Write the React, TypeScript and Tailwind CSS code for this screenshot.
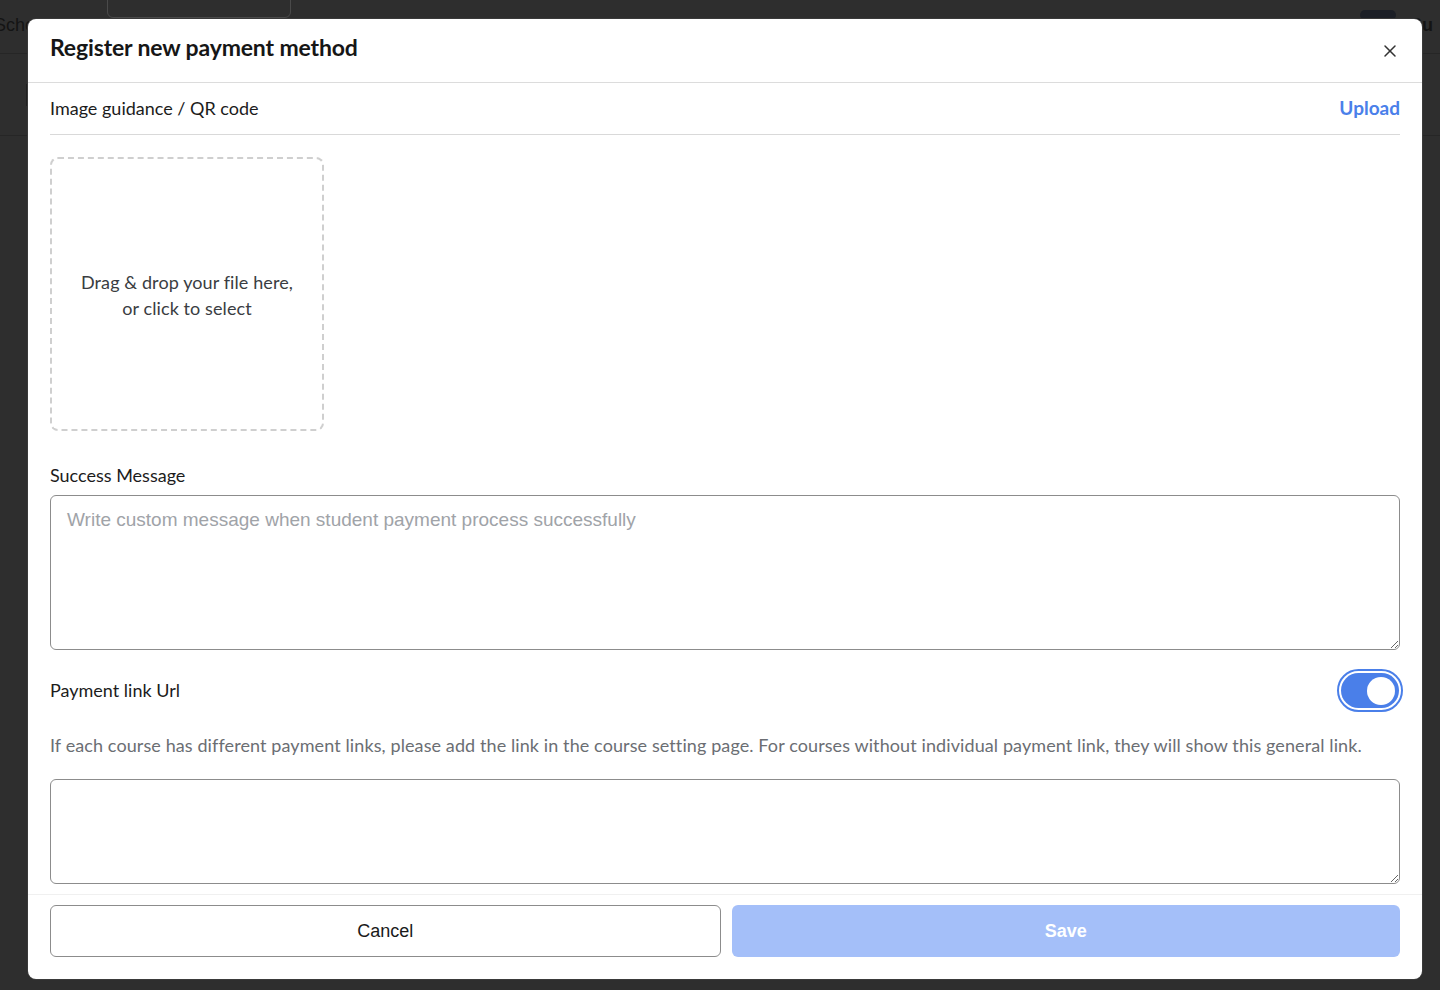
import { X } from "lucide-react";

const lato = "font-['Lato','Noto_Sans',sans-serif]";
const arial = "font-['Liberation_Sans','Arial',sans-serif]";

function Backdrop() {
  // the page behind the dialog, dimmed
  return (
    <div className="h-full w-full bg-[#2e2e2e]">
      <div className="flex items-start h-[54px] border-b border-[#262626]">
        <span className={`${arial} text-[18px] text-[#141414] mt-[12px] -ml-[6px] w-[113px]`}>Schedule</span>
        <div className="w-[184px] h-[20px] -mt-[2px] rounded-b-md border border-[#4a4a4a]" />
        <div className="flex-1" />
        <div className="w-[36px] h-[10px] mt-[10px] rounded-md bg-[#1c1f26]" />
        <span className={`${arial} text-[18px] font-bold text-[#141414] mt-[12px] ml-[14px] w-[30px] overflow-hidden`}>Su</span>
      </div>
      <div className="flex h-[82px] border-b border-[#262626]">
        <div className="w-[27px] border-r border-[#202020] mt-[30px] h-[22px]" />
      </div>
    </div>
  );
}

function Toggle() {
  return (
    <div className="rounded-full border-2 border-[#4a7fe9] p-[2px]">
      <div className="w-[58px] h-[35px] rounded-full bg-[#4a7fe9] flex items-center justify-end px-[4px]">
        <div className="w-[28px] h-[28px] rounded-full bg-white" />
      </div>
    </div>
  );
}

export default function App() {
  return (
    <div className="relative h-[990px] w-[1440px] overflow-hidden">
      <Backdrop />
      <div className="absolute left-[28px] top-[19px] w-[1394px] h-[960px] bg-white rounded-lg flex flex-col overflow-hidden shadow-[0_0_0_1px_#3a3a3a]">
        <div className="h-[64px] flex items-center justify-between pl-[22px] pr-[22px] border-b border-[#dcdcdc] shrink-0">
          <h2 className={`${lato} text-[23px] font-bold tracking-[-0.15px] text-[#161616] -mt-[6px]`}>
            Register new payment method
          </h2>
          <X size={20} strokeWidth={1.8} className="text-[#333]" />
        </div>

        <div className="flex-1 overflow-hidden px-[22px]">
          <div className="h-[52px] flex items-center justify-between border-b border-[#d9d9d9]">
            <span className={`${lato} text-[18px] text-[#1c1c1c]`}>Image guidance / QR code</span>
            <span className={`${lato} text-[19px] font-bold text-[#4a80ea]`}>Upload</span>
          </div>

          <div className="mt-[22px] w-[274px] h-[274px] rounded-lg border-2 border-dashed border-[#cfcfcf] flex items-center justify-center">
            <p className={`${lato} text-[18px] leading-[26px] tracking-[0.1px] text-[#3a3d42] text-center mt-[2px]`}>
              Drag &amp; drop your file here,
              <br />
              or click to select
            </p>
          </div>

          <div className={`${lato} text-[18px] text-[#1c1c1c] mt-[31px] leading-[26px]`}>Success Message</div>
          <textarea
            className={`${arial} block mt-[7px] w-full h-[155px] rounded-md border border-[#8c8c8c] px-[16px] py-[12px] text-[19px] leading-[24px] text-[#222] placeholder:text-[#a0a3a8] outline-none`}
            placeholder="Write custom message when student payment process successfully"
          />

          <div className="flex items-center justify-between mt-[19px] -mr-[3px]">
            <span className={`${lato} text-[18px] text-[#1c1c1c]`}>Payment link Url</span>
            <Toggle />
          </div>

          <p className={`${lato} text-[18px] leading-[26px] tracking-[0.1px] text-[#6b6e73] mt-[20px]`}>
            If each course has different payment links, please add the link in the course setting page. For courses without individual payment link, they will show this general link.
          </p>

          <textarea
            className={`${arial} block mt-[21px] w-full h-[105px] rounded-md border border-[#8c8c8c] px-[16px] py-[12px] text-[18px] text-[#222] outline-none`}
          />
        </div>

        <div className="shrink-0 border-t border-[#f0f0f0] px-[22px] pt-[10px] pb-[22px] flex gap-[11px]">
          <button className={`${arial} flex-1 h-[52px] rounded-md border border-[#8c8c8c] bg-white text-[18px] font-medium text-[#1a1a1a]`}>
            Cancel
          </button>
          <button className={`${arial} flex-1 h-[52px] rounded-md bg-[#a4bff9] text-[18px] font-bold text-white`}>
            Save
          </button>
        </div>
      </div>
    </div>
  );
}
